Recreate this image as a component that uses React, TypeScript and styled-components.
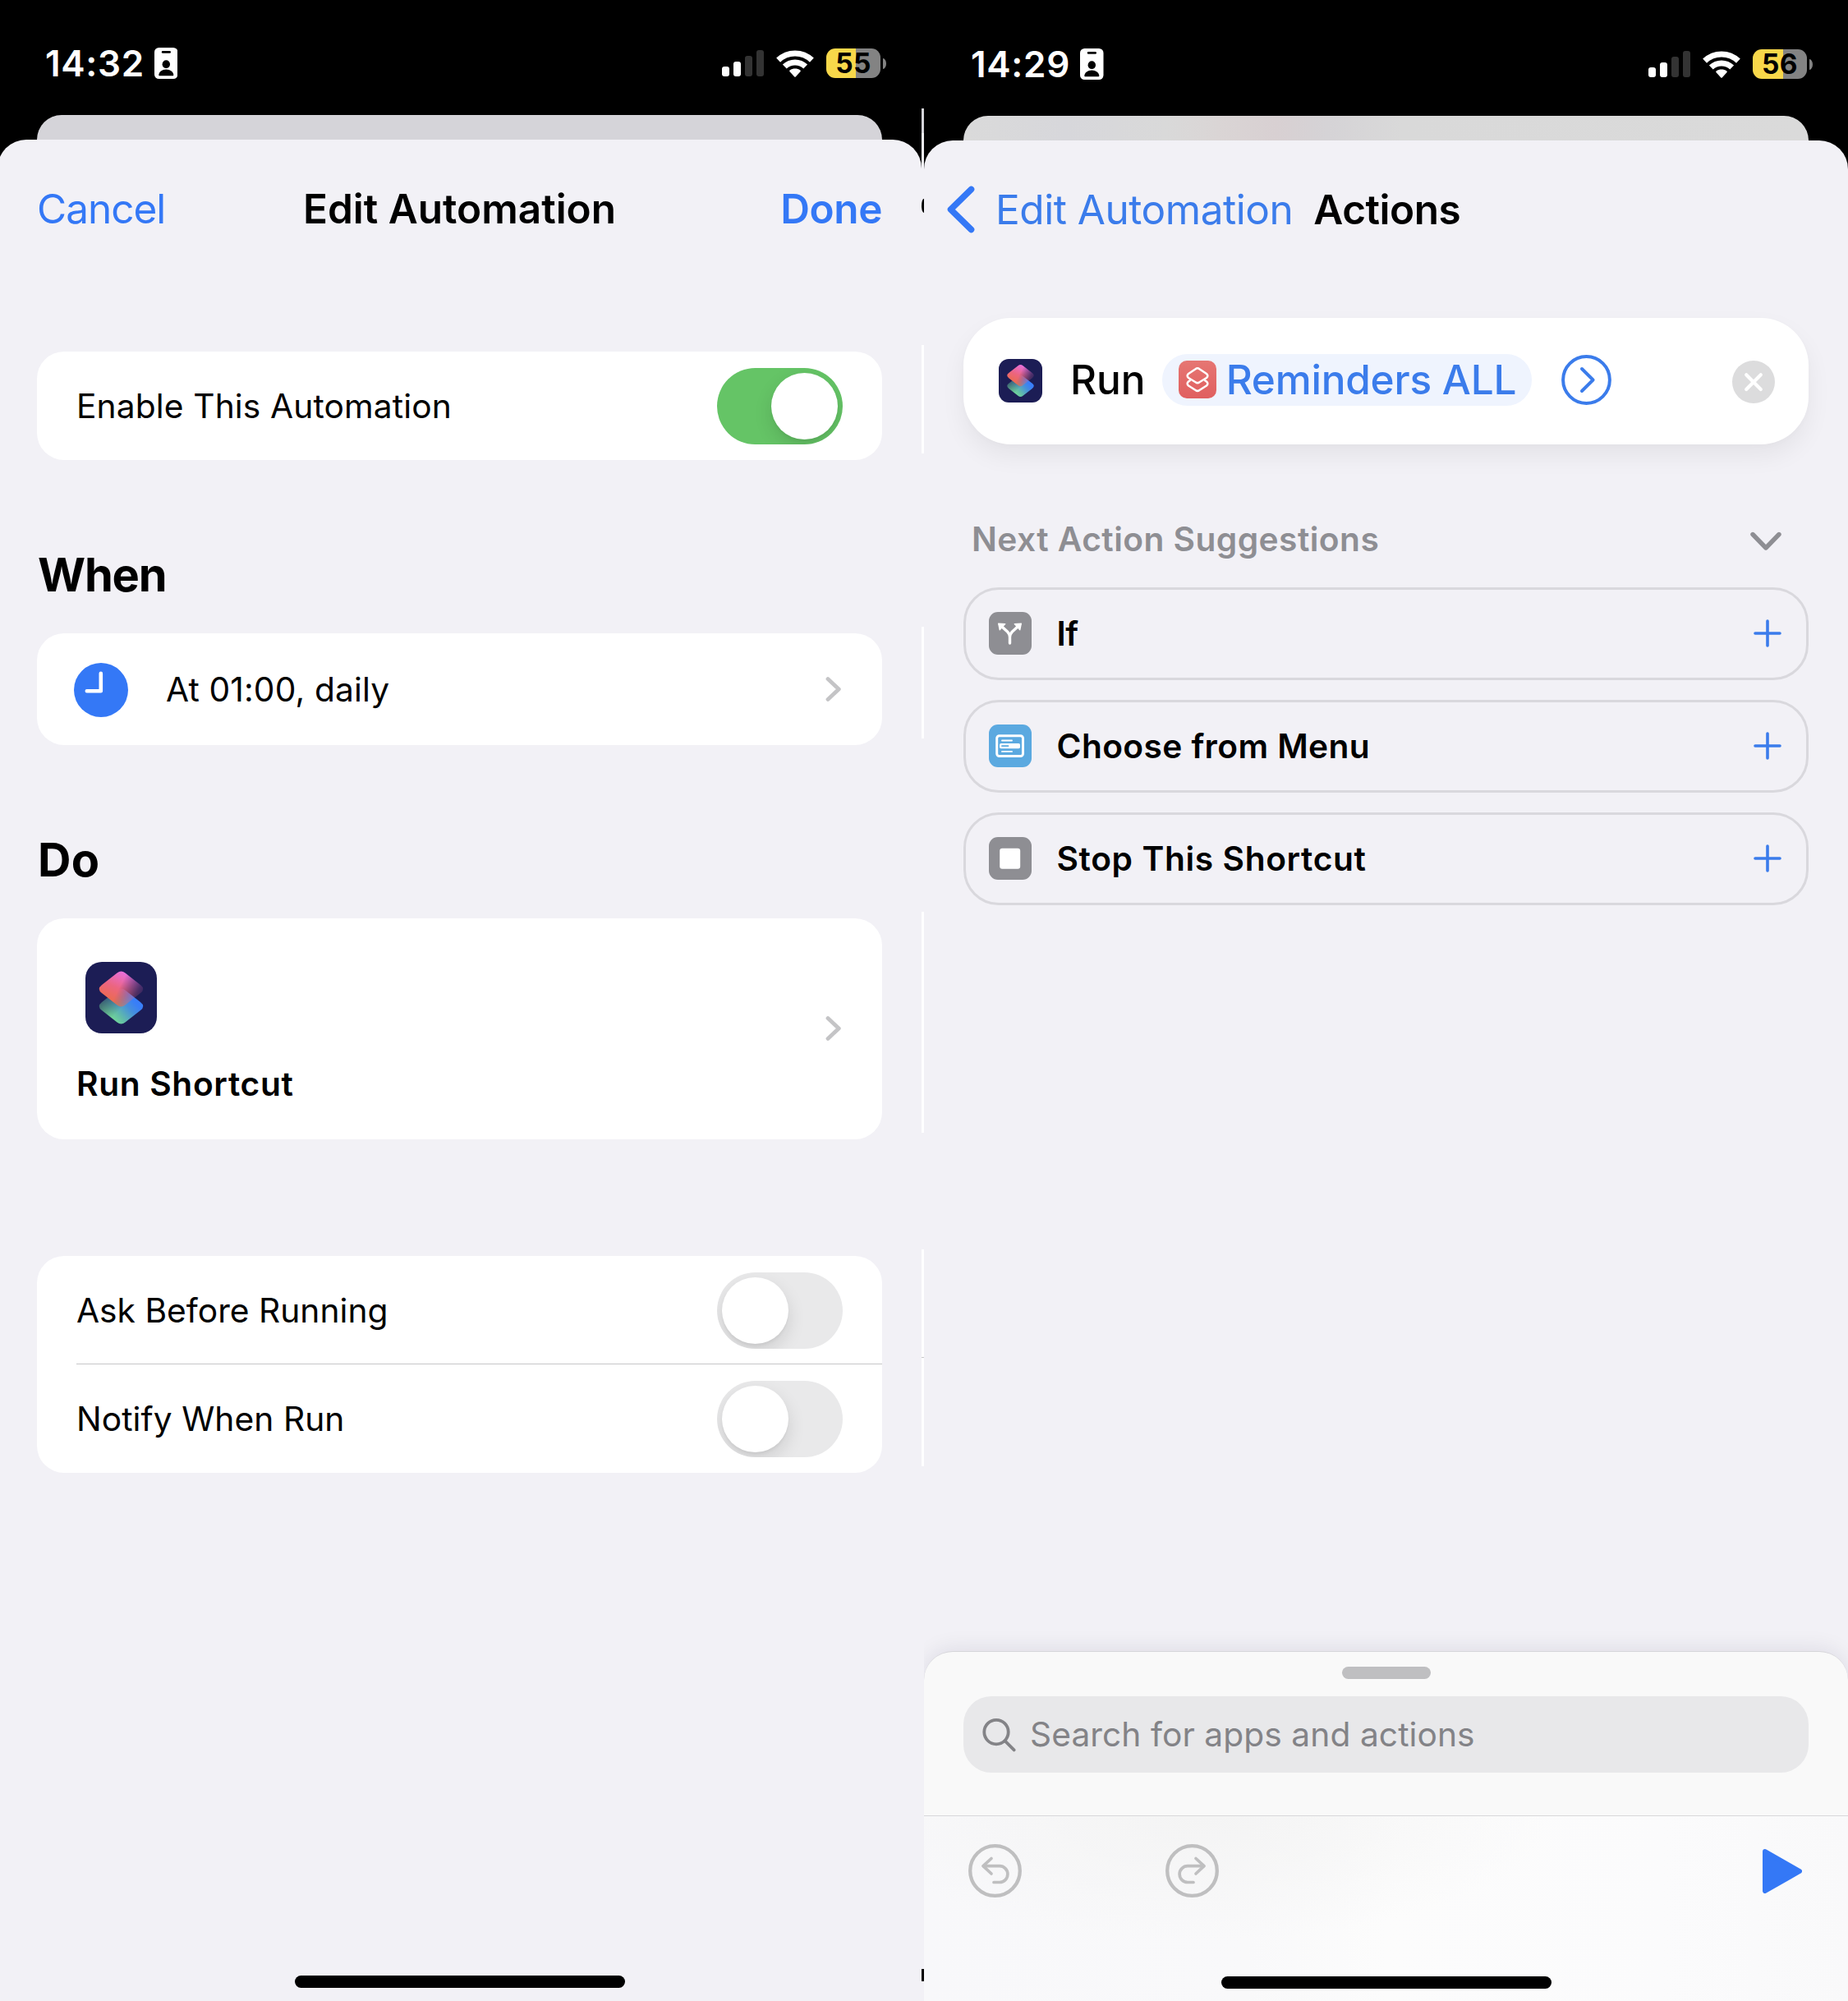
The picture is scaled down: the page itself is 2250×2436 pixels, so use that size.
import React from 'react';
import styled, { createGlobalStyle, css } from 'styled-components';

const color = {
  sheet: '#f2f1f6',
  backCard: '#d5d4d9',
  blue: '#3478f6',
  link: '#3b7ceb',
  grey: '#8e8e93',
  chevron: '#c4c4c6',
  hairline: '#c6c6c8',
  green: '#65c466',
  toggleOff: '#e9e9ea',
};

const GlobalStyle = createGlobalStyle`
  * { box-sizing: border-box; }
  html, body { margin: 0; background: #000; }
  body { font-family: Inter, "Liberation Sans", sans-serif; color: #000; }
  svg { display: block; flex: none; }
`;

/* ---------- shared frame ---------- */

const Page = styled.div`
  display: flex;
  width: 2250px;
  height: 2436px;
  overflow: hidden;
  background: #000;
`;

const Viewport = styled.div<{ $width: number }>`
  display: flex;
  width: ${(p) => p.$width}px;
  height: 100%;
  overflow: hidden;
  flex: none;
`;

const Screen = styled.div<{ $shiftX?: number; $top?: number }>`
  display: flex;
  flex-direction: column;
  flex: none;
  width: 1125px;
  height: 100%;
  margin-left: ${(p) => p.$shiftX ?? 0}px;
  padding-top: ${(p) => p.$top ?? 0}px;
  background: #000;
`;

const StatusBar = styled.div<{ $padLeft: number }>`
  display: flex;
  align-items: center;
  flex: none;
  height: 140px;
  padding: 14px 43px 0 ${(p) => p.$padLeft}px;
`;

const Time = styled.span`
  font-size: 44px;
  font-weight: 600;
  letter-spacing: 0.7px;
  line-height: 54px;
  color: #fff;
  margin-right: 12px;
`;

const StatusIcons = styled.div`
  display: flex;
  align-items: center;
  margin-left: auto;
`;

const BatteryBody = styled.div<{ $level: number }>`
  display: flex;
  align-items: center;
  justify-content: center;
  width: 66px;
  height: 36px;
  margin: 0 3px 0 15px;
  border-radius: 11px;
  background: ${(p) => `linear-gradient(90deg, #f8d84a ${p.$level}%, #838383 ${p.$level}%)`};
  font-size: 33.5px;
  font-weight: 700;
  letter-spacing: 0.4px;
  line-height: 38px;
`;

const BatteryNub = styled.div`
  width: 4px;
  height: 13px;
  border-radius: 0 4px 4px 0 / 0 6.5px 6.5px 0;
  background: #838383;
`;

const BackCard = styled.div<{ $tinted?: boolean }>`
  flex: none;
  height: 30px;
  margin: 0 48px;
  border-radius: 31px 31px 0 0;
  background: ${(p) =>
    p.$tinted
      ? 'linear-gradient(90deg, #dadada 0%, #d7d7db 12%, #d9d9d9 24%, #dad5d5 30%, #d8d0d2 37%, #d5d3d6 43%, #d9d9d9 52%, #dadada 100%)'
      : color.backCard};
`;

const Sheet = styled.div`
  display: flex;
  flex-direction: column;
  flex: 1;
  min-height: 0;
  overflow: hidden;
  border-radius: 35px 35px 0 0;
  background: ${color.sheet};
`;

const HomeIndicator = styled.div<{ $bottom: number }>`
  flex: none;
  width: 402px;
  height: 15px;
  margin: auto auto ${(p) => p.$bottom}px;
  border-radius: 8px;
  background: #000;
`;

/* ---------- navigation ---------- */

const navText = css`
  font-size: 49.5px;
  line-height: 60px;
  white-space: nowrap;
`;

const TitleNav = styled.header`
  display: grid;
  grid-template-columns: 1fr auto 1fr;
  align-items: center;
  flex: none;
  height: 168px;
  padding: 0 48px;
`;

const NavButton = styled.span<{ $strong?: boolean; $end?: boolean }>`
  ${navText}
  color: ${color.blue};
  font-weight: ${(p) => (p.$strong ? 600 : 400)};
  letter-spacing: ${(p) => (p.$strong ? -0.4 : -1)}px;
  text-align: ${(p) => (p.$end ? 'right' : 'left')};
`;

const NavTitle = styled.h1<{ $track?: number }>`
  ${navText}
  margin: 0;
  font-weight: 600;
  letter-spacing: ${(p) => p.$track ?? 0}px;
`;

const BackNav = styled.header`
  display: flex;
  align-items: center;
  flex: none;
  height: 168px;
  padding-left: 27px;
`;

const BackLabel = styled.span`
  ${navText}
  margin: 0 25px 0 25px;
  color: ${color.link};
  letter-spacing: -0.46px;
`;

/* ---------- automation form ---------- */

const Form = styled.main`
  display: flex;
  flex-direction: column;
  padding: 90px 48px 0;
`;

const Card = styled.section<{ $top?: number }>`
  display: flex;
  flex-direction: column;
  margin-top: ${(p) => p.$top ?? 0}px;
  border-radius: 33px;
  background: #fff;
  overflow: hidden;
`;

const SectionTitle = styled.h2<{ $track: number }>`
  margin: 101px 0 31px 1px;
  font-size: 56px;
  font-weight: 700;
  line-height: 79px;
  letter-spacing: ${(p) => p.$track}px;
`;

const SwitchRow = styled.div<{ $divided?: boolean }>`
  display: flex;
  align-items: center;
  justify-content: space-between;
  height: 132px;
  margin-left: 48px;
  padding: ${(p) => (p.$divided ? 1 : 0)}px 48px 0 0;
  border-bottom: ${(p) => (p.$divided ? `1px solid ${color.hairline}` : 'none')};
`;

const LinkRow = styled.div<{ $height: number; $padLeft: number }>`
  display: flex;
  align-items: center;
  height: ${(p) => p.$height}px;
  padding: 0 49px 0 ${(p) => p.$padLeft}px;
`;

const Label = styled.span<{ $weight?: number; $track?: number }>`
  font-size: 40.7px;
  font-weight: ${(p) => p.$weight ?? 400};
  line-height: 50px;
  letter-spacing: ${(p) => p.$track ?? 0.15}px;
  white-space: nowrap;
`;

const RowLabel = styled(Label)`
  padding-top: 1px;
`;

const TimeLabel = styled(RowLabel)`
  margin-left: 46px;
`;

const RowChevron = styled.svg`
  margin-left: auto;
`;

const Switch = styled.span<{ $on?: boolean }>`
  display: flex;
  justify-content: ${(p) => (p.$on ? 'flex-end' : 'flex-start')};
  width: 153px;
  height: 93px;
  padding: 6px;
  border-radius: 47px;
  overflow: hidden;
  background: ${(p) => (p.$on ? color.green : color.toggleOff)};
`;

const Knob = styled.span`
  width: 81px;
  height: 81px;
  border-radius: 50%;
  background: #fff;
  box-shadow: 0 9px 22px rgba(0, 0, 0, 0.12), 0 3px 3px rgba(0, 0, 0, 0.04);
`;

const ActionStack = styled.div`
  display: flex;
  flex-direction: column;
  gap: 36px;
  padding-top: 10px;

  svg { margin-left: 11px; }
`;

/* ---------- stitched edge between the two screens ---------- */

const Edge = styled.div`
  display: flex;
  flex-direction: column;
  flex: none;
  width: 3px;
  height: 100%;
  background: ${color.sheet};
`;

const EdgePart = styled.div<{ $h: number; $c: string; $round?: boolean }>`
  flex: none;
  height: ${(p) => p.$h}px;
  background: ${(p) => p.$c};
  border-radius: ${(p) => (p.$round ? '3px 0 0 3px / 9px 0 0 9px' : 0)};
`;

/* ---------- actions editor ---------- */

const ActionCard = styled.section`
  display: flex;
  align-items: center;
  flex: none;
  height: 154px;
  margin: 48px 48px 0;
  padding: 0 41px 0 43px;
  border-radius: 58px;
  background: #fff;
  box-shadow: 0 14px 30px rgba(0, 0, 0, 0.06), 0 2px 8px rgba(0, 0, 0, 0.015);
`;

const Sentence = styled.div`
  display: flex;
  align-items: center;
  padding-bottom: 4px;
  font-size: 49.5px;
  font-weight: 500;
  line-height: 62px;
  white-space: nowrap;
`;

const AppIcon = styled.span`
  padding-top: 3px;
`;

const Verb = styled.span`
  margin: 0 20px 0 34px;
`;

const Token = styled.span`
  display: flex;
  align-items: center;
  gap: 12px;
  height: 63px;
  margin-right: 36px;
  padding: 0 19px 0 20px;
  border-radius: 31px;
  background: #eff4fe;
  color: ${color.link};
  letter-spacing: -0.22px;
`;

const RemoveButton = styled.span`
  margin: 2px 0 0 auto;
`;

const SuggestionHeader = styled.div`
  display: flex;
  align-items: center;
  justify-content: space-between;
  flex: none;
  height: 80px;
  margin: 76px 48px 18px;
  padding: 0 33px 0 10px;
  color: ${color.grey};

  svg { margin-top: 4px; }
`;

const SuggestionList = styled.div`
  display: flex;
  flex-direction: column;
  flex: none;
  gap: 24px;
  padding: 0 48px;
`;

const Suggestion = styled.div`
  display: flex;
  align-items: center;
  height: 113px;
  padding: 0 30px 1px 28px;
  border: 3px solid #d9d8dd;
  border-radius: 43px;
`;

const SuggestionName = styled(Label)`
  margin: 0 auto 0 30.5px;
  padding-top: 2px;
`;

const SearchPanel = styled.section`
  display: flex;
  flex-direction: column;
  flex: none;
  height: 426px;
  margin-top: auto;
  border-top: 1px solid #d6d6da;
  border-radius: 35px 35px 0 0;
  background: #f9f9f9;
  box-shadow: 0 -3px 26px rgba(20, 10, 60, 0.085);
  overflow: hidden;
`;

const Grabber = styled.div`
  flex: none;
  width: 108px;
  height: 15px;
  margin: 18px auto 21px;
  border-radius: 8px;
  background: #bfbfc1;
`;

const SearchField = styled.div`
  display: flex;
  align-items: center;
  flex: none;
  gap: 17px;
  height: 93px;
  margin: 0 48px 52px;
  padding-left: 23px;
  border-radius: 34px;
  background: #e8e8ea;
  color: #838387;
`;

const Toolbar = styled.div`
  display: flex;
  flex-direction: column;
  flex: 1;
  border-top: 1px solid #d8d8da;
  background: radial-gradient(ellipse 420px 150px at 340px 0, #f4f4f4, rgba(244, 244, 244, 0)),
    linear-gradient(90deg, #f8f8fa 0%, #f9f9fa 35%, #fcfcfc 50%, #fbfbfc 80%, #f9f9fa 100%);
`;

const ToolRow = styled.div`
  display: flex;
  align-items: center;
  gap: 175px;
  height: 65px;
  margin-top: 34px;
  padding: 0 56px 0 54px;

  svg:last-child { margin-left: auto; }
`;

/* ---------- drawings ---------- */

const IdIcon = () => (
  <svg width="28.5" height="38" viewBox="0 0 28.5 38">
    <rect width="28.5" height="38" rx="5.5" fill="#fff" />
    <rect x="8.8" y="4" width="11.2" height="2.8" rx="1.4" />
    <ellipse cx="14.3" cy="20.2" rx="4.7" ry="4.9" />
    <path d="M5.3 33.2c0-3.800 4.200-6.800 9-6.800s9 3 9 6.800c0 .7-.4 1.100-1.100 1.100H6.400c-.7 0-1.100-.4-1.100-1.100z" />
  </svg>
);

const SignalIcon = () => (
  <svg width="51" height="32" viewBox="0 0 51 32">
    <rect x="0" y="20" width="9" height="12" rx="3" fill="#fff" />
    <rect x="14" y="14" width="9" height="18" rx="3" fill="#fff" />
    <rect x="28" y="7" width="9" height="25" rx="3" fill="#333" />
    <rect x="42" y="0" width="9" height="32" rx="3" fill="#333" />
  </svg>
);

const WifiSvg = styled.svg`
  margin-left: 15.5px;
`;

const WifiIcon = () => (
  <WifiSvg width="46" height="33" viewBox="0 0 46 33" fill="none" stroke="#fff" strokeWidth="7">
    <path d="M2.600 12.100A29.500 29.500 0 0 1 43.400 12.100" />
    <path d="M10.300 20A18.500 18.500 0 0 1 35.700 20" />
    <path d="M16.600 26.300C16 25.700 16.100 24.900 16.700 24.500C20.400 21.900 25.600 21.900 29.300 24.500C29.900 24.900 30 25.700 29.400 26.300L23.700 32.400C23.300 32.800 22.700 32.800 22.300 32.400Z" fill="#fff" stroke="none" />
  </WifiSvg>
);

const ClockIcon = () => (
  <svg width="66" height="68" viewBox="0 -2 66 68">
    <circle cx="33" cy="33" r="33" fill={color.blue} />
    <path d="M32.800 12.700V34.200H15.800" fill="none" stroke="#fff" strokeWidth="4.600" strokeLinecap="round" strokeLinejoin="round" />
  </svg>
);

const ForwardChevron = () => (
  <RowChevron width="20" height="31" viewBox="0 0 20 31" fill="none">
    <path d="M3 2.600L16.300 15L3 27.400" stroke={color.chevron} strokeWidth="4.800" strokeLinecap="round" strokeLinejoin="round" />
  </RowChevron>
);

const diamond =
  'M38.500 13.500Q43.500 9.500 48.500 13.500L67 28Q73.500 33 67 38L48.500 52.500Q43.500 56.500 38.500 52.500L20 38Q13.500 33 20 28Z';

const ShortcutsLogo = ({ id, size }: { id: string; size: number }) => (
  <svg width={size} height={size} viewBox="0 0 87 87">
    <defs>
      <linearGradient id={`${id}-warm`} gradientUnits="userSpaceOnUse" x1="32" y1="48" x2="48" y2="12">
        <stop offset="0" stopColor="#ec6b4e" />
        <stop offset="0.45" stopColor="#ec6580" />
        <stop offset="1" stopColor="#e76fdf" />
      </linearGradient>
      <linearGradient id={`${id}-cool`} gradientUnits="userSpaceOnUse" x1="37" y1="52" x2="62" y2="30">
        <stop offset="0" stopColor="#70d49b" />
        <stop offset="0.25" stopColor="#62bca8" />
        <stop offset="0.7" stopColor="#458fdd" />
        <stop offset="1" stopColor="#397ef8" />
      </linearGradient>
      <linearGradient id={`${id}-fadeRight`} gradientUnits="userSpaceOnUse" x1="42" y1="30" x2="68" y2="43">
        <stop offset="0" stopColor="#fff" />
        <stop offset="0.75" stopColor="#fff" stopOpacity="0.25" />
        <stop offset="1" stopColor="#fff" stopOpacity="0.12" />
      </linearGradient>
      <linearGradient id={`${id}-fadeLeft`} gradientUnits="userSpaceOnUse" x1="22" y1="43" x2="40" y2="60">
        <stop offset="0" stopColor="#fff" stopOpacity="0.35" />
        <stop offset="1" stopColor="#fff" />
      </linearGradient>
      <mask id={`${id}-maskWarm`} maskUnits="userSpaceOnUse" x="0" y="0" width="87" height="87">
        <rect width="87" height="87" fill={`url(#${id}-fadeRight)`} />
      </mask>
      <mask id={`${id}-maskCool`} maskUnits="userSpaceOnUse" x="0" y="0" width="87" height="87">
        <rect width="87" height="87" fill={`url(#${id}-fadeLeft)`} />
      </mask>
    </defs>
    <rect width="87" height="87" rx="20" fill="#1c1d55" />
    <g mask={`url(#${id}-maskCool)`}>
      <path d={diamond} transform="translate(0 21)" fill={`url(#${id}-cool)`} />
    </g>
    <g mask={`url(#${id}-maskWarm)`}>
      <path d={diamond} fill={`url(#${id}-warm)`} />
    </g>
  </svg>
);

const ShortcutTokenIcon = () => (
  <svg width="46" height="46" viewBox="0 0 46 46">
    <defs>
      <linearGradient id="token" x1="0" y1="0" x2="0" y2="1">
        <stop offset="0" stopColor="#e67673" />
        <stop offset="1" stopColor="#e0605f" />
      </linearGradient>
    </defs>
    <rect width="46" height="46" rx="10" fill="url(#token)" />
    <g fill="none" stroke="#fff" strokeWidth="2.500" strokeLinejoin="round" strokeLinecap="round">
      <path d="M20.600 10.200Q23 8.300 25.400 10.200L34 16Q36.800 18.500 34 21L25.400 26.200Q23 28 20.600 26.200L12 21Q9.200 18.500 12 16Z" />
      <path d="M13.800 24.200L12 25.500Q9.200 28 12 30.500L20.600 36Q23 37.800 25.400 36L34 30.500Q36.800 28 34 25.500L32.200 24.200" />
    </g>
  </svg>
);

const BackChevron = () => (
  <svg width="35" height="58" viewBox="0 0 35 58" fill="none">
    <path d="M30.500 4.500L5.500 29L30.500 53.500" stroke={color.blue} strokeWidth="7.600" strokeLinecap="round" strokeLinejoin="round" />
  </svg>
);

const ShowMoreIcon = () => (
  <svg width="61" height="61" viewBox="0 0 61 61" fill="none" stroke="#3b7ceb" strokeWidth="4">
    <circle cx="30.500" cy="30.500" r="28.400" />
    <path d="M25 17L38.600 30.500L25 44" strokeLinecap="round" strokeLinejoin="round" />
  </svg>
);

const RemoveIcon = () => (
  <svg width="52" height="52" viewBox="0 0 52 52">
    <circle cx="26" cy="26" r="26" fill="#dcdcdd" />
    <path d="M17.200 17.300L34.800 34.900M34.800 17.300L17.200 34.900" stroke="#fff" strokeWidth="4.200" strokeLinecap="round" />
  </svg>
);

const DownChevron = () => (
  <svg width="38" height="24" viewBox="0 0 38 24" fill="none">
    <path d="M3 3.500L19 20L35 3.500" stroke={color.grey} strokeWidth="5.400" strokeLinecap="round" strokeLinejoin="round" />
  </svg>
);

const BranchIcon = () => (
  <svg width="52" height="52" viewBox="0 0 52 52">
    <rect width="52" height="52" rx="11" fill={color.grey} />
    <path d="M25.500 38V30.500Q25.500 27 22.800 24.200L16 18M25.500 30.500Q25.500 27 28.200 24.200L35 18" fill="none" stroke="#fff" strokeWidth="3.400" strokeLinecap="round" />
    <path d="M11.600 14.200L19.800 14.600L13.200 21.800ZM39.400 14.200L31.200 14.600L37.800 21.800Z" fill="#fff" stroke="#fff" strokeWidth="1.200" strokeLinejoin="round" />
  </svg>
);

const MenuIcon = () => (
  <svg width="52" height="52" viewBox="0 0 52 52">
    <rect width="52" height="52" rx="11" fill="#5ba9e0" />
    <rect x="9.700" y="13.700" width="31.800" height="24.800" rx="3" fill="none" stroke="#fff" strokeWidth="3" />
    <rect x="13" y="22.900" width="25" height="6.400" rx="1.800" fill="#fff" />
    <path d="M16 19.500H28M16 32.900H28" stroke="#fff" strokeWidth="1.900" strokeLinecap="round" />
    <path d="M16 26.100H23.500" stroke="#5ba9e0" strokeWidth="1.900" strokeLinecap="round" />
  </svg>
);

const StopIcon = () => (
  <svg width="52" height="52" viewBox="0 0 52 52">
    <rect width="52" height="52" rx="11" fill={color.grey} />
    <rect x="13.200" y="13.800" width="25" height="25" rx="3" fill="#fff" />
  </svg>
);

const PlusIcon = () => (
  <svg width="34" height="34" viewBox="0 0 34 34">
    <path d="M17 2V32M2 17H32" stroke="#3b7ceb" strokeWidth="3.600" strokeLinecap="round" />
  </svg>
);

const SearchIcon = () => (
  <svg width="41" height="42" viewBox="0 0 41 42" fill="none" stroke="#838387" strokeWidth="3.800" strokeLinecap="round">
    <circle cx="17" cy="17.600" r="14.700" />
    <path d="M27.600 28.400L38.600 39.400" />
  </svg>
);

const UndoIcon = ({ redo }: { redo?: boolean }) => (
  <svg width="65" height="65" viewBox="0 0 65 65" fill="none" stroke="#bfbfc0" strokeWidth="4.300">
    <circle cx="32.500" cy="32.500" r="30.300" />
    <g transform={redo ? 'translate(65 0) scale(-1 1)' : undefined} strokeWidth="3.700" strokeLinecap="round" strokeLinejoin="round">
      <path d="M28 17.500L18 26.700L28 36" />
      <path d="M18.500 26.700H38A9.900 9.900 0 0 1 38 46.500H31" />
    </g>
  </svg>
);

const PlayIcon = () => (
  <svg width="48" height="54" viewBox="0 0 48 54">
    <path d="M3 3L45 27L3 51Z" fill={color.blue} stroke={color.blue} strokeWidth="6" strokeLinejoin="round" />
  </svg>
);

/* ---------- composition ---------- */

const Status = ({ time, battery, padLeft }: { time: string; battery: number; padLeft: number }) => (
  <StatusBar $padLeft={padLeft}>
    <Time>{time}</Time>
    <IdIcon />
    <StatusIcons>
      <SignalIcon />
      <WifiIcon />
      <BatteryBody $level={battery}>{battery}</BatteryBody>
      <BatteryNub />
    </StatusIcons>
  </StatusBar>
);

const edgeParts: [number, string, boolean?][] = [
  [132, '#000'],
  [30, color.backCard],
  [80, color.sheet],
  [17, '#000', true],
  [161, color.sheet],
  [132, '#fff'],
  [211, color.sheet],
  [136, '#fff'],
  [211, color.sheet],
  [269, '#fff'],
  [142, color.sheet],
  [131, '#fff'],
  [1, color.hairline],
  [132, '#fff'],
  [612, color.sheet],
  [15, '#000'],
];

const suggestions = [
  { name: 'If', icon: <BranchIcon />, track: -0.6 },
  { name: 'Choose from Menu', icon: <MenuIcon />, track: 0.4 },
  { name: 'Stop This Shortcut', icon: <StopIcon />, track: 0.62 },
];

export default function App() {
  return (
    <>
      <GlobalStyle />
      <Page>
        <Viewport $width={1122}>
          <Screen $shiftX={-3}>
            <Status time="14:32" battery={55} padLeft={58} />
            <BackCard />
            <Sheet>
              <TitleNav>
                <NavButton>Cancel</NavButton>
                <NavTitle>Edit Automation</NavTitle>
                <NavButton $strong $end>Done</NavButton>
              </TitleNav>
              <Form>
                <Card>
                  <SwitchRow>
                    <RowLabel $track={0.14}>Enable This Automation</RowLabel>
                    <Switch $on><Knob /></Switch>
                  </SwitchRow>
                </Card>

                <SectionTitle $track={-1.2}>When</SectionTitle>
                <Card>
                  <LinkRow $height={136} $padLeft={45}>
                    <ClockIcon />
                    <TimeLabel>At 01:00, daily</TimeLabel>
                    <ForwardChevron />
                  </LinkRow>
                </Card>

                <SectionTitle $track={0.2}>Do</SectionTitle>
                <Card>
                  <LinkRow $height={269} $padLeft={48}>
                    <ActionStack>
                      <ShortcutsLogo id="large" size={87} />
                      <RowLabel $weight={600} $track={0.66}>Run Shortcut</RowLabel>
                    </ActionStack>
                    <ForwardChevron />
                  </LinkRow>
                </Card>

                <Card $top={142}>
                  <SwitchRow $divided>
                    <RowLabel $track={0.03}>Ask Before Running</RowLabel>
                    <Switch><Knob /></Switch>
                  </SwitchRow>
                  <SwitchRow>
                    <RowLabel $track={0.08}>Notify When Run</RowLabel>
                    <Switch><Knob /></Switch>
                  </SwitchRow>
                </Card>
              </Form>
              <HomeIndicator $bottom={16} />
            </Sheet>
          </Screen>
        </Viewport>

        <Edge>
          {edgeParts.map(([h, c, round], i) => (
            <EdgePart key={i} $h={h} $c={c} $round={round} />
          ))}
        </Edge>

        <Viewport $width={1125}>
          <Screen $top={1}>
            <Status time="14:29" battery={56} padLeft={57} />
            <BackCard $tinted />
            <Sheet>
              <BackNav>
                <BackChevron />
                <BackLabel>Edit Automation</BackLabel>
                <NavTitle $track={-0.45}>Actions</NavTitle>
              </BackNav>

              <ActionCard>
                <Sentence>
                  <AppIcon><ShortcutsLogo id="small" size={53} /></AppIcon>
                  <Verb>Run</Verb>
                  <Token>
                    <ShortcutTokenIcon />
                    Reminders ALL
                  </Token>
                  <ShowMoreIcon />
                </Sentence>
                <RemoveButton><RemoveIcon /></RemoveButton>
              </ActionCard>

              <SuggestionHeader>
                <Label $weight={600} $track={0.45}>Next Action Suggestions</Label>
                <DownChevron />
              </SuggestionHeader>
              <SuggestionList>
                {suggestions.map((s) => (
                  <Suggestion key={s.name}>
                    {s.icon}
                    <SuggestionName $weight={600} $track={s.track}>{s.name}</SuggestionName>
                    <PlusIcon />
                  </Suggestion>
                ))}
              </SuggestionList>

              <SearchPanel>
                <Grabber />
                <SearchField>
                  <SearchIcon />
                  <Label $track={0.08}>Search for apps and actions</Label>
                </SearchField>
                <Toolbar>
                  <ToolRow>
                    <UndoIcon />
                    <UndoIcon redo />
                    <PlayIcon />
                  </ToolRow>
                  <HomeIndicator $bottom={15} />
                </Toolbar>
              </SearchPanel>
            </Sheet>
          </Screen>
        </Viewport>
      </Page>
    </>
  );
}
